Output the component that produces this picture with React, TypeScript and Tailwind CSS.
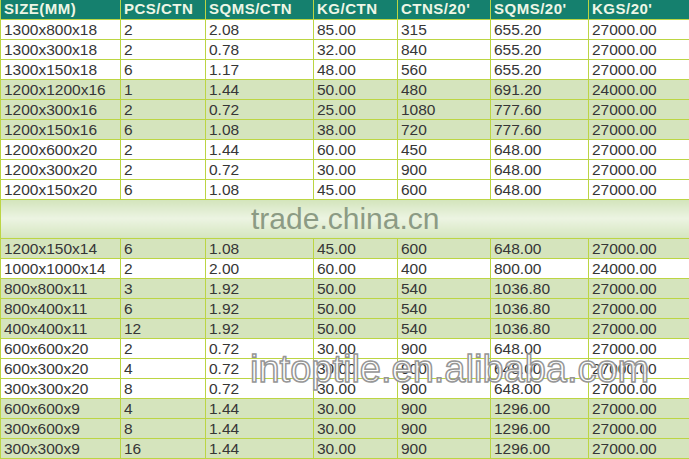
import React from 'react';

type Row = { cells: string[]; green: boolean };

const headers = ['SIZE(MM)', 'PCS/CTN', 'SQMS/CTN', 'KG/CTN', "CTNS/20'", "SQMS/20'", "KGS/20'"];

const widths = [120, 85, 108, 84, 93, 98, 101];

const topRows: Row[] = [
    { cells: ['1300x800x18', '2', '2.08', '85.00', '315', '655.20', '27000.00'], green: false },
    { cells: ['1300x300x18', '2', '0.78', '32.00', '840', '655.20', '27000.00'], green: false },
    { cells: ['1300x150x18', '6', '1.17', '48.00', '560', '655.20', '27000.00'], green: false },
    { cells: ['1200x1200x16', '1', '1.44', '50.00', '480', '691.20', '24000.00'], green: true },
    { cells: ['1200x300x16', '2', '0.72', '25.00', '1080', '777.60', '27000.00'], green: true },
    { cells: ['1200x150x16', '6', '1.08', '38.00', '720', '777.60', '27000.00'], green: true },
    { cells: ['1200x600x20', '2', '1.44', '60.00', '450', '648.00', '27000.00'], green: false },
    { cells: ['1200x300x20', '2', '0.72', '30.00', '900', '648.00', '27000.00'], green: false },
    { cells: ['1200x150x20', '6', '1.08', '45.00', '600', '648.00', '27000.00'], green: false },
];

const bottomRows: Row[] = [
    { cells: ['1200x150x14', '6', '1.08', '45.00', '600', '648.00', '27000.00'], green: true },
    { cells: ['1000x1000x14', '2', '2.00', '60.00', '400', '800.00', '24000.00'], green: false },
    { cells: ['800x800x11', '3', '1.92', '50.00', '540', '1036.80', '27000.00'], green: true },
    { cells: ['800x400x11', '6', '1.92', '50.00', '540', '1036.80', '27000.00'], green: true },
    { cells: ['400x400x11', '12', '1.92', '50.00', '540', '1036.80', '27000.00'], green: true },
    { cells: ['600x600x20', '2', '0.72', '30.00', '900', '648.00', '27000.00'], green: false },
    { cells: ['600x300x20', '4', '0.72', '30.00', '900', '648.00', '27000.00'], green: false },
    { cells: ['300x300x20', '8', '0.72', '30.00', '900', '648.00', '27000.00'], green: false },
    { cells: ['600x600x9', '4', '1.44', '30.00', '900', '1296.00', '27000.00'], green: true },
    { cells: ['300x600x9', '8', '1.44', '30.00', '900', '1296.00', '27000.00'], green: true },
    { cells: ['300x300x9', '16', '1.44', '30.00', '900', '1296.00', '27000.00'], green: true },
];

function DataRow({ row }: { row: Row }) {
    return (
        <tr className={`h-[20px] ${row.green ? 'bg-[#d5e4bd]' : 'bg-white'}`}>
            {row.cells.map((c, i) => (
                <td key={i} className="border border-[#bcd543] px-[3px] py-0 leading-[19px] text-[15.5px] text-[#363636] whitespace-nowrap">
                    {c}
                </td>
            ))}
        </tr>
    );
}

export default function App() {
    return (
        <div className="relative w-[689px] h-[459px] overflow-hidden bg-white font-['Liberation_Sans',Arial,sans-serif]">
            <table className="table-fixed border-collapse w-[689px]">
                <colgroup>
                    {widths.map((w, i) => (
                        <col key={i} style={{ width: w }} />
                    ))}
                </colgroup>
                <thead>
                    <tr className="h-[19px] bg-[#15806e]">
                        {headers.map((h) => (
                            <th key={h} className="border border-[#bcd543] border-t-0 px-[3px] py-0 text-left font-bold text-[15px] leading-[18px] tracking-[0.5px] text-[#eef6e6] whitespace-nowrap">
                                {h}
                            </th>
                        ))}
                    </tr>
                </thead>
                <tbody>
                    {topRows.map((r, i) => (
                        <DataRow key={`t${i}`} row={r} />
                    ))}
                    <tr className="h-[39px]">
                        <td colSpan={7} className="border border-[#bcd543] p-0 bg-gradient-to-b from-[#d3e4bb] via-[#ecf4e2] to-[#d6e6c0]" />
                    </tr>
                    {bottomRows.map((r, i) => (
                        <DataRow key={`b${i}`} row={r} />
                    ))}
                </tbody>
            </table>

            {/* watermarks */}
            <div className="absolute left-[251px] top-[200px] text-[30px] leading-[38px] text-[#8c9b84] pointer-events-none">
                trade.china.cn
            </div>
            <div className="absolute left-[250px] top-[346px] text-[38px] leading-[46px] text-white/90 [-webkit-text-stroke:1.5px_#969696] pointer-events-none whitespace-nowrap">
                intoptile.en.alibaba.com
            </div>
        </div>
    );
}
